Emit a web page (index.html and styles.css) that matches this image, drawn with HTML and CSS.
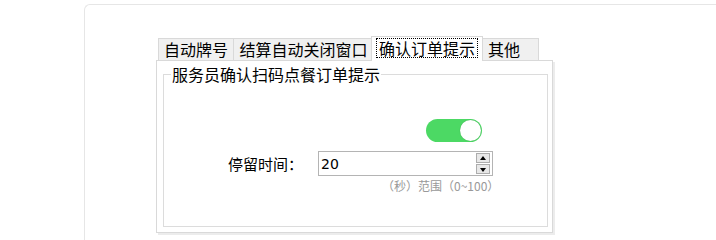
FILE: index.html
```html
<!DOCTYPE html>
<html lang="zh-CN">
<head>
    <meta charset="UTF-8">
    <title>确认订单提示</title>
    <link rel="stylesheet" href="styles.css">
</head>
<body>
    <div class="card">
        <div class="tabs">
            <div class="tabbar">
                <div class="tab t1">自动牌号</div>
                <div class="tab t2">结算自动关闭窗口</div>
                <div class="tab active"><span class="focus">确认订单提示</span></div>
                <div class="tab last">其他</div>
            </div>
            <div class="panel">
                <fieldset class="group">
                    <legend>服务员确认扫码点餐订单提示</legend>
                    <div class="switch-row">
                        <span class="switch on"><span class="knob"></span></span>
                    </div>
                    <div class="field">
                        <label for="stay">停留时间：</label>
                        <div class="spin">
                            <input type="text" id="stay" value="20">
                            <div class="spin-btns">
                                <span class="spin-btn up"></span>
                                <span class="spin-btn down"></span>
                            </div>
                        </div>
                    </div>
                    <p class="hint">（秒）范围（0~100）</p>
                </fieldset>
            </div>
        </div>
    </div>
</body>
</html>
```

FILE: styles.css
```css
* {
    box-sizing: border-box;
    margin: 0;
    padding: 0;
}

body {
    font-family: "Noto Sans CJK SC", "Noto Sans", sans-serif;
    background: #fff;
    color: #000;
    overflow: hidden;
}

/* carte blanche coupée par le bord droit et le bas */
.card {
    margin: 4px 0 0 84px;
    height: 236px;
    border-top: 1px solid #e6e6e6;
    border-left: 1px solid #e6e6e6;
    border-top-left-radius: 6px;
    padding: 31px 0 0 71px;
}

.tabs {
    width: 400px;
}

.tabbar {
    display: flex;
    align-items: flex-end;
    height: 24px;
    padding-left: 2px;
}

.tab {
    height: 22px;
    margin-right: -1px;
    border: 1px solid #d9d9d9;
    border-bottom: none;
    background: #f0f0f0;
    font-size: 16px;
    line-height: 20px;
    text-align: center;
    white-space: nowrap;
}

.t1 {
    width: 76px;
}

.t2 {
    width: 141px;
}

.tab.active {
    width: 112px;
    height: 25px;
    margin: 0 -1px -1px -2px;
    padding-top: 1px;
    background: #fff;
    position: relative;
    z-index: 1;
}

.tab.last {
    width: 57px;
    margin-left: 0;
    text-align: left;
    padding-left: 5px;
}

.focus {
    display: inline-block;
    height: 20px;
    padding: 0 2px;
    border: 1px dotted #000;
    line-height: 18px;
}

.panel {
    width: 397px;
    height: 173px;
    border: 1px solid #d9d9d9;
    box-shadow: 2px 2px 0 #ececec;
    background: #fff;
    padding: 4px 4px 0 6px;
}

.group {
    height: 162px;
    border: 1px solid #dcdcdc;
    padding: 0;
}

.group legend {
    margin-left: 7px;
    padding: 0 1px;
    font-size: 16px;
    line-height: 18px;
}

.switch-row {
    padding: 36px 0 0 262px;
}

.switch {
    display: block;
    width: 56px;
    height: 23px;
    border-radius: 12px;
    background: #4cd964;
    position: relative;
}

.knob {
    position: absolute;
    top: 1px;
    right: 1px;
    width: 21px;
    height: 21px;
    border-radius: 50%;
    background: #fff;
    box-shadow: 0 0 1px rgba(0,0,0,0.3);
}

.field {
    display: flex;
    align-items: center;
    margin-top: 9px;
    padding-left: 64px;
}

.field label {
    width: 90px;
    font-size: 15px;
    line-height: 25px;
}

.spin {
    display: flex;
    align-items: center;
    width: 175px;
    height: 25px;
    border: 1px solid #b4b4b4;
    padding-right: 2px;
}

.spin input {
    flex: 1;
    min-width: 0;
    height: 23px;
    border: none;
    outline: none;
    padding-left: 2px;
    font-family: "DejaVu Sans", sans-serif;
    font-size: 14px;
    color: #000;
}

.spin-btns {
    display: flex;
    flex-direction: column;
    gap: 1px;
}

.spin-btn {
    position: relative;
    width: 14px;
    height: 10px;
    border: 1px solid #adadad;
    background: #e8e8e8;
}

.spin-btn::after {
    content: "";
    position: absolute;
    left: 3px;
    border-left: 3px solid transparent;
    border-right: 3px solid transparent;
}

.spin-btn.up::after {
    top: 2px;
    border-bottom: 4px solid #000;
}

.spin-btn.down::after {
    top: 3px;
    border-top: 4px solid #000;
}

.hint {
    margin: 2px 0 0 218px;
    font-size: 12px;
    line-height: 15px;
    color: #999;
}
```
